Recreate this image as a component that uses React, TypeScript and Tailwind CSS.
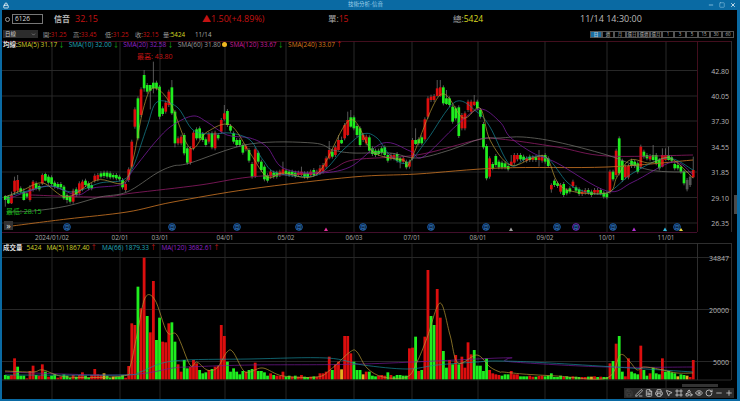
import { ChevronDown, Eye, FileText, Frame, Lock, Minus, MousePointer2, PenLine, Plus, Printer, RotateCw, Save, Shapes, Square, X } from 'lucide-react';

type Tone = 'r' | 'g' | 'y' | 'n';
// top, bottom, tone, optional wick high / low. y values are thirds of a pixel below y=60
type Candle = [number, number, Tone, number?, number?];
type Point = [number, number];

const candles: Candle[] = [
  [408,420,'g',405,440],[410,430,'g',405,432],[405,430,'r',395,432],[362,395,'r',350,405],[360,392,'r',345,400],[385,395,'g'],[395,420,'g',385,422],[400,410,'g'],[385,420,'r',375,425],[365,390,'r',360,395],
  [370,385,'g'],[378,388,'g'],[345,370,'r',340,375],[342,362,'g',338,364],[350,368,'g'],[352,372,'g'],[368,380,'g'],[372,382,'g'],[372,382,'g'],[380,415,'g',375,420],
  [405,420,'g',400,430],[410,425,'g'],[392,425,'r'],[388,405,'g'],[370,400,'r'],[365,388,'r'],[362,375,'g'],[370,385,'g'],[375,385,'g'],[347,362,'r'],
  [345,358,'r'],[340,350,'g'],[338,348,'g'],[338,350,'g'],[340,352,'g'],[345,352,'g'],[345,355,'g'],[350,358,'g'],[360,382,'g'],[372,390,'r'],
  [328,360,'r'],[245,320,'r'],[148,200,'r'],[115,235,'g'],[88,165,'r'],[45,85,'g',30,95],[75,95,'g'],[75,92,'g',75,148],[68,85,'g',5,100],[68,85,'g'],
  [80,170,'g',75,178],[145,162,'g'],[128,155,'r'],[95,135,'r'],[82,160,'g',60,165],[155,250,'g',150,262],[235,250,'r'],[230,250,'r'],[225,280,'g'],[265,308,'g'],
  [265,308,'r'],[218,265,'r'],[208,235,'g'],[205,235,'g'],[222,240,'g'],[238,255,'g'],[222,245,'r'],[220,262,'g'],[218,265,'r'],[225,235,'g'],
  [180,215,'r'],[160,178,'r',135,182],[153,195,'g'],[198,212,'g'],[220,245,'g'],[240,255,'g'],[240,255,'g'],[255,278,'g'],[258,268,'r'],[270,302,'g'],
  [312,350,'g'],[268,348,'r'],[278,305,'g'],[305,330,'g'],[320,358,'g'],[345,362,'g',340,368],[335,350,'r'],[338,350,'g'],[338,350,'g'],[335,345,'r'],
  [328,342,'r',305,345],[332,342,'g'],[335,345,'g'],[335,345,'g'],[338,348,'g'],[338,345,'r'],[335,345,'r',320,348],[340,350,'g'],[340,352,'g'],[335,345,'r'],
  [330,345,'g'],[335,342,'r'],[325,342,'r',315,345],[315,335,'r'],[295,320,'r'],[270,295,'r',243,298],[275,290,'g'],[262,285,'r'],[240,270,'r',225,272],[240,250,'g',230,252],
  [195,235,'r'],[180,225,'r',155,228],[172,200,'g',150,203],[172,205,'g'],[198,225,'g'],[205,255,'g'],[225,240,'r'],[230,250,'r'],[232,272,'g'],[265,282,'g'],
  [272,285,'g'],[272,282,'g'],[265,278,'g'],[262,285,'g'],[285,302,'g'],[285,295,'r'],[285,295,'r'],[282,302,'g'],[295,305,'g',290,325],[295,305,'r'],
  [305,322,'g'],[305,320,'r'],[240,295,'r'],[240,252,'g',205,255],[238,250,'g'],[232,250,'g'],[178,238,'r'],[115,170,'r'],[110,120,'r'],[108,120,'r'],
  [85,108,'r',60,110],[82,108,'r',60,110],[82,130,'g'],[115,132,'g',90,135],[115,135,'g'],[140,185,'g'],[145,175,'g'],[142,228,'g'],[165,205,'r'],[160,205,'r'],
  [125,150,'r'],[125,155,'r'],[125,135,'r',105,138],[125,145,'g'],[150,170,'g'],[192,262,'g'],[258,355,'g'],[295,350,'r'],[312,325,'g'],[288,315,'g'],
  [305,322,'g'],[308,322,'g'],[310,322,'g'],[318,328,'g'],[305,315,'r',285,318],[285,308,'r'],[285,298,'r'],[285,298,'g'],[290,300,'g'],[295,302,'r'],
  [290,300,'g'],[292,300,'r'],[292,300,'g'],[292,300,'r',270,320],[290,302,'r'],[285,305,'g'],[295,318,'g'],[375,388,'r',370,398],[362,375,'g'],[370,378,'g'],
  [375,395,'r'],[372,405,'g'],[390,400,'g'],[385,395,'g'],[365,378,'r'],[382,392,'g'],[388,402,'g'],[395,402,'r'],[390,398,'r'],[390,398,'g'],
  [395,405,'g'],[390,398,'r'],[390,398,'r'],[390,400,'g'],[398,410,'g'],[400,412,'g'],[335,395,'r'],[335,358,'g'],[272,345,'r'],[235,340,'g'],
  [302,360,'g'],[320,352,'r'],[318,352,'r'],[302,318,'g'],[305,318,'g'],[310,335,'g'],[260,320,'r'],[275,290,'g'],[285,295,'g'],[288,298,'r'],
  [285,300,'g',255,302],[285,310,'g'],[300,325,'g'],[285,320,'r',265,322],[285,300,'r',265,302],[285,300,'g',260,302],[292,302,'g'],[312,325,'g'],[315,325,'g'],[320,335,'g'],
  [335,370,'g'],[360,388,'n'],[350,375,'n'],[330,352,'r',290,355],
];

// bar top, thirds of a pixel below y=235; the bars all stand on 433
const volumes: [number, Tone][] = [
  [420,'g'],[422,'g'],[420,'r'],[370,'r'],[395,'g'],[422,'g'],[422,'g'],[430,'r'],[408,'r'],[392,'r'],
  [420,'g'],[422,'r'],[388,'r'],[410,'g'],[425,'r'],[422,'g'],[418,'g'],[428,'r'],[425,'r'],[418,'g'],
  [422,'g'],[428,'g'],[420,'r'],[425,'g'],[420,'r'],[412,'r'],[422,'g'],[428,'g'],[420,'r'],[402,'r'],
  [418,'r'],[420,'r'],[415,'y'],[422,'g'],[428,'g'],[425,'y'],[425,'g'],[425,'g'],[420,'g'],[428,'r'],
  [393,'r'],[265,'r'],[270,'r'],[155,'g'],[220,'r'],[68,'r'],[243,'g'],[292,'r'],[138,'r'],[315,'g'],
  [248,'g'],[320,'r'],[322,'r'],[265,'r'],[262,'g'],[320,'g'],[388,'r'],[410,'r'],[375,'g'],[400,'g'],
  [395,'r'],[375,'r'],[385,'r'],[405,'g'],[415,'g'],[412,'g'],[405,'r'],[402,'g'],[395,'r'],[392,'r'],
  [270,'r'],[303,'r'],[380,'g'],[410,'g'],[400,'g'],[410,'g'],[418,'g'],[408,'g'],[410,'r'],[405,'g'],
  [402,'g'],[383,'r'],[408,'g'],[408,'g'],[412,'g'],[422,'g'],[415,'r'],[420,'g'],[422,'r'],[422,'r'],
  [410,'r'],[425,'g'],[422,'g'],[425,'r'],[422,'g'],[425,'r'],[420,'r'],[425,'g'],[426,'g'],[425,'r'],
  [424,'g'],[425,'r'],[415,'r'],[415,'r'],[410,'r'],[365,'r'],[405,'g'],[388,'r'],[380,'r'],[403,'y'],
  [303,'r'],[303,'r'],[355,'r'],[380,'g'],[405,'g'],[405,'g'],[418,'y'],[410,'r'],[410,'g'],[422,'g'],
  [424,'g'],[422,'r'],[420,'r'],[422,'r'],[412,'g'],[420,'r'],[424,'g'],[420,'g'],[420,'g'],[422,'g'],
  [422,'g'],[340,'r'],[338,'r'],[305,'g'],[408,'r'],[405,'g'],[305,'r'],[105,'r'],[243,'g'],[270,'g'],
  [162,'r'],[248,'r'],[348,'g'],[398,'g'],[375,'r'],[388,'g'],[360,'r'],[388,'g'],[365,'r'],[398,'r'],
  [322,'r'],[358,'r'],[345,'g'],[392,'g'],[392,'g'],[408,'g'],[370,'g'],[405,'r'],[415,'r'],[418,'r'],
  [420,'r'],[422,'g'],[418,'g'],[418,'g'],[408,'r'],[418,'r'],[418,'r'],[424,'g'],[424,'g'],[424,'g'],
  [422,'r'],[425,'r'],[425,'g'],[423,'r'],[422,'r'],[424,'g'],[422,'g'],[415,'g'],[426,'g'],[426,'g'],
  [422,'g'],[426,'r'],[424,'g'],[426,'g'],[424,'r'],[425,'g'],[426,'g'],[426,'r'],[426,'r'],[425,'g'],
  [425,'y'],[424,'r'],[426,'g'],[425,'r'],[426,'g'],[426,'g'],[385,'r'],[378,'g'],[326,'r'],[303,'g'],
  [410,'g'],[424,'r'],[370,'r'],[410,'g'],[415,'g'],[418,'g'],[332,'r'],[405,'g'],[422,'g'],[415,'r'],
  [398,'g'],[415,'g'],[418,'g'],[370,'r'],[410,'g'],[408,'g'],[412,'g'],[415,'g'],[424,'y'],[418,'g'],
  [420,'g'],[422,'y'],[426,'r'],[375,'r'],
];

const priceAverages: { color: string; width: number; points: Point[] }[] = [
  { color: '#b86a20', width: 0.9, points: [[12,226],[67,219],[127,212],[173,202],[250,189],[353,177],[417,174],[500,168],[607,167],[693,160]] },
  { color: '#8e1c66', width: 0.8, points: [[30,195],[100,197],[133,193],[200,185],[250,177],[323,172],[353,160],[417,155],[477,140],[500,139],[557,147],[607,156],[693,155]] },
  { color: '#7a7a72', width: 0.7, points: [[7,212],[33,211],[67,206],[100,197],[127,192],[157,173],[173,166],[190,163],[250,144],[313,143],[333,150],[353,153],[390,153],[417,158],[450,150],[480,139],[500,138],[523,137],[557,142],[607,155],[650,170],[693,172]] },
  { color: '#761a98', width: 0.8, points: [[5,200],[27,192],[50,186],[77,195],[93,188],[123,184],[133,170],[157,140],[173,125],[193,116],[207,122],[227,135],[250,138],[267,147],[283,168],[317,173],[350,167],[383,143],[410,151],[423,157],[457,125],[480,109],[500,122],[510,137],[533,153],[557,163],[607,191],[633,182],[673,162],[693,175]] },
  { color: '#178a9a', width: 0.7, points: [[5,197],[20,193],[50,186],[73,192],[100,183],[123,180],[133,167],[147,127],[157,102],[177,107],[193,130],[213,134],[230,133],[250,140],[263,160],[277,173],[317,175],[343,150],[363,134],[377,138],[390,155],[407,163],[427,140],[455,102],[477,112],[490,127],[510,165],[527,158],[547,158],[567,182],[583,191],[607,193],[633,173],[667,158],[693,170]] },
  { color: '#b89a34', width: 0.7, points: [[5,197],[23,190],[43,183],[67,197],[97,180],[123,183],[133,160],[143,110],[153,88],[170,103],[190,148],[207,132],[230,125],[250,153],[267,177],[283,173],[317,174],[350,120],[373,152],[403,160],[410,162],[440,95],[463,118],[480,108],[490,140],[510,165],[533,158],[547,158],[563,188],[607,193],[617,177],[630,160],[650,163],[670,158],[693,178]] },
];

const volumeAverages: { color: string; points: Point[] }[] = [
  { color: '#761a98', points: [[5,372],[123,375],[173,368],[187,367],[250,365],[363,364],[500,358],[507,359],[513,362],[607,367],[693,367]] },
  { color: '#178a9a', points: [[5,375],[123,375],[140,372],[173,361],[250,359],[327,358],[363,365],[407,369],[437,365],[477,362],[500,361],[550,363],[693,372]] },
  { color: '#b89a34', points: [[5,371],[33,372],[43,370],[67,377],[123,376],[130,367],[137,335],[145,298],[155,300],[167,332],[177,335],[190,365],[197,362],[207,370],[217,368],[227,352],[233,352],[243,370],[250,372],[263,368],[283,376],[317,377],[330,370],[350,352],[357,352],[367,368],[383,377],[407,377],[417,362],[427,338],[440,303],[450,335],[458,363],[477,355],[490,367],[500,372],[503,372],[523,374],[557,376],[607,378],[620,355],[630,362],[637,370],[643,367],[653,368],[663,370],[677,373],[693,373]] },
];

const dates: [string, number][] = [['2024/01/02',52],['02/01',120],['03/01',160],['04/01',225],['05/02',286],['06/03',354],['07/01',412],['08/01',478],['09/02',545],['10/01',607],['11/01',666]];
const priceAxis: [string, number][] = [['42.80',70.5],['40.05',96],['37.30',121],['34.55',146.5],['31.85',172],['29.10',197.5],['26.35',223]];
const volumeAxis: [string, number][] = [['34847',257.5],['20000',309.5],['5000',361.5]];
const monthMarks: [number, string][] = [[67,'#1d5fa8'],[172,'#1d5fa8'],[237,'#1d5fa8'],[299,'#1d5fa8'],[363,'#1d5fa8'],[431,'#1d5fa8'],[486,'#1d5fa8'],[557,'#1d5fa8'],[576,'#7a22b8'],[613,'#1d5fa8'],[677,'#1d5fa8']];
const flags: [number, string][] = [[326,'#e0309a'],[511,'#a0a0a0'],[634,'#b030d0'],[665,'#30b8e0']];

const smaLegend = [
  { text: 'SMA(5) 31.17', color: 'text-[#cfcf2a]', arrow: '↓', up: false, ml: 'ml-0' },
  { text: 'SMA(10) 32.00', color: 'text-[#22a8b8]', arrow: '↓', up: false, ml: 'ml-[4px]' },
  { text: 'SMA(20) 32.58', color: 'text-[#8f22c8]', arrow: '↓', up: false, ml: 'ml-[4px]' },
  { text: 'SMA(60) 31.80', color: 'text-[#9a9a9a]', arrow: '', up: false, ml: 'ml-[4px]' },
  { text: 'SMA(120) 33.67', color: 'text-[#c81a9a]', arrow: '↓', up: false, ml: 'ml-[3px]' },
  { text: 'SMA(240) 33.07', color: 'text-[#d8781a]', arrow: '↑', up: true, ml: 'ml-[4px]' },
];

const tabs = ['日', '週', '月', '還日', '還週', '還月', '1', '3', '5', '15', '30', '60'];
const tools = [Save, PenLine, FileText, Printer, MousePointer2, Frame, Shapes, Eye, RotateCw, Minus, Plus];

const barColor: Record<Tone, string> = { r: '#dc0e0e', g: '#1fee1f', y: '#e8b020', n: '#555' };
const candleX = (i: number) => 5.3 + 3.085 * i;

function smoothPath(points: Point[]) {
  let d = `M${points[0][0]} ${points[0][1]}`;
  for (let i = 0; i < points.length - 1; i++) {
    const p0 = points[i - 1] ?? points[i];
    const p1 = points[i];
    const p2 = points[i + 1];
    const p3 = points[i + 2] ?? p2;
    const c1x = p1[0] + (p2[0] - p0[0]) / 6;
    const c1y = p1[1] + (p2[1] - p0[1]) / 6;
    const c2x = p2[0] - (p3[0] - p1[0]) / 6;
    const c2y = p2[1] - (p3[1] - p1[1]) / 6;
    d += ` C${c1x.toFixed(1)} ${c1y.toFixed(1)} ${c2x.toFixed(1)} ${c2y.toFixed(1)} ${p2[0]} ${p2[1]}`;
  }
  return d;
}

function PricePanel() {
  return (
    <svg className="block w-full h-[202px]" viewBox="2 41 735 202">
      <rect x="2" y="41" width="735" height="202" fill="#000" />
      {priceAxis.map(([, y]) => <line key={y} x1="2" x2="697" y1={y} y2={y} stroke="#2b2b2b" strokeWidth="0.9" />)}
      {dates.map(([, x]) => <line key={x} x1={x} x2={x} y1="41" y2="232" stroke="#2e2e2e" strokeWidth="0.9" />)}
      <line x1="2" x2="731" y1="41.5" y2="41.5" stroke="#4a1020" strokeWidth="0.9" />
      <line x1="2" x2="697" y1="232.5" y2="232.5" stroke="#4a1030" strokeWidth="0.9" />
      <line x1="697.5" x2="697.5" y1="41" y2="232" stroke="#4a1020" strokeWidth="0.9" />
      <line x1="731.5" x2="731.5" y1="41" y2="232" stroke="#333" strokeWidth="0.9" />

      {candles.map(([top, bottom, tone, high, low], i) => {
        const x = candleX(i);
        return (
          <g key={i}>
            <line x1={x} x2={x} y1={60 + (high ?? top - 6) / 3} y2={60 + (low ?? bottom + 6) / 3} stroke="#7d7d7d" strokeWidth="0.7" />
            <rect x={x - 1.35} y={60 + top / 3} width="2.7" height={(bottom - top) / 3} fill={barColor[tone]} />
          </g>
        );
      })}

      {priceAverages.map((line) => (
        <path key={line.color} d={smoothPath(line.points)} fill="none" stroke={line.color} strokeWidth={line.width} />
      ))}

      {monthMarks.map(([x, color]) => (
        <g key={x}>
          <circle cx={x} cy="227" r="3.4" fill="#0b2240" stroke={color} strokeWidth="0.9" />
          <text x={x} y="229" textAnchor="middle" fontSize="5" fill="#3a86d0">月</text>
        </g>
      ))}
      {flags.map(([x, color]) => <polygon key={x} points={`${x - 2},231 ${x + 2},231 ${x},227.5`} fill={color} />)}
      <polygon points="679,231 683,231 681,228" fill="#e8d840" />

      <text x="137" y="59" fontSize="7" fill="#c81414">最高: 43.80</text>
      <text x="6" y="213.5" fontSize="7" fill="#18c018">最低: 28.15</text>
      {priceAxis.map(([label, y]) => <text key={label} x="729" y={y + 3} textAnchor="end" fontSize="7" fill="#b8b8b8">{label}</text>)}
      {dates.map(([label, x]) => <text key={label} x={x} y="240" textAnchor="middle" fontSize="6.4" fill="#a8a8a8">{label}</text>)}

      <rect x="4" y="221" width="9" height="9" fill="#333" />
      <text x="8.5" y="229" textAnchor="middle" fontSize="9" fill="#ddd">»</text>
    </svg>
  );
}

function VolumePanel() {
  return (
    <svg className="block w-full h-[156px]" viewBox="2 243 735 156">
      {volumeAxis.map(([, y]) => <line key={y} x1="2" x2="731" y1={y} y2={y} stroke="#2b2b2b" strokeWidth="0.9" />)}
      {dates.map(([, x]) => <line key={x} x1={x} x2={x} y1="243" y2="399" stroke="#282828" strokeWidth="0.9" />)}
      <line x1="2" x2="731" y1="243.5" y2="243.5" stroke="#333" strokeWidth="0.9" />
      <line x1="2" x2="731" y1="380" y2="380" stroke="#2f2f2f" strokeWidth="0.9" />
      <line x1="697.5" x2="697.5" y1="243" y2="380" stroke="#333" strokeWidth="0.9" />
      <line x1="731.5" x2="731.5" y1="243" y2="380" stroke="#333" strokeWidth="0.9" />

      {volumes.map(([top, tone], i) => (
        <rect key={i} x={candleX(i) - 1.4} y={235 + top / 3} width="2.8" height={(433 - top) / 3} fill={barColor[tone]} />
      ))}
      {volumeAverages.map((line) => (
        <path key={line.color} d={smoothPath(line.points)} fill="none" stroke={line.color} strokeWidth="0.7" />
      ))}
      {volumeAxis.map(([label, y]) => <text key={label} x="729" y={y + 3} textAnchor="end" fontSize="7" fill="#b8b8b8">{label}</text>)}
    </svg>
  );
}

export default function App() {
  return (
    <div className="relative w-[740px] h-[401px] overflow-hidden bg-[#0a6aa3] flex flex-col font-['Open_Sans','Noto_Sans_CJK_TC',sans-serif]">
      {/* Title bar */}
      <div className="h-[10px] flex items-center justify-between pl-[3px] pr-[4px] text-[#9fd0ea]">
        <Lock className="w-[6px] h-[7px] text-white" strokeWidth={3} />
        <span className="text-[5.5px] leading-none ml-[14px]">技術分析-信音</span>
        <div className="flex items-center gap-[5px]">
          <Minus className="w-[6px] h-[6px]" strokeWidth={3} />
          <Square className="w-[6px] h-[6px]" strokeWidth={2} />
          <X className="w-[6px] h-[6px] text-white" strokeWidth={3} />
        </div>
      </div>

      <div className="flex-1 min-h-0 ml-[2px] mr-[3px] bg-black flex flex-col">
        {/* Quote row */}
        <div className="h-[18px] flex items-center pl-[3px] shrink-0">
          <span className="w-[5px] h-[5px] rounded-full border border-[#999] shrink-0" />
          <div className="ml-[2px] w-[31px] h-[10px] border border-[#777] flex items-center pl-[2px] text-[6.5px] text-[#ddd]">6126</div>
          <div className="ml-[11px] w-[148px] flex items-center gap-[5px]">
            <span className="text-[8px] font-semibold text-[#bbb]">信音</span>
            <span className="text-[9px] text-[#c41212]">32.15</span>
          </div>
          <div className="w-[126px] text-[9px] text-[#c41212]">▲1.50(+4.89%)</div>
          <div className="w-[125px] text-[8.5px] text-[#aaa]">單:<span className="text-[#c41212]">15</span></div>
          <div className="w-[127px] text-[8.5px] text-[#aaa]">總:<span className="text-[#d8d820]">5424</span></div>
          <div className="text-[9px] text-[#bbb]">11/14 14:30:00</div>
        </div>

        {/* OHLC row and period tabs */}
        <div className="h-[13px] flex items-center justify-between pl-[1px] pr-[3px] shrink-0">
          <div className="flex items-center">
            <div className="w-[35px] h-[8px] bg-[#2c2c2c] flex items-center justify-between px-[2px] text-[5.5px] text-[#ccc]">
              日線
              <ChevronDown className="w-[5px] h-[5px]" />
            </div>
            <div className="flex ml-[5px] text-[6.2px] text-[#999]">
              <span className="w-[30px]">開:<span className="text-[#c41212]">31.25</span></span>
              <span className="w-[32px]">高:<span className="text-[#c41212]">33.45</span></span>
              <span className="w-[30px]">低:<span className="text-[#c41212]">31.25</span></span>
              <span className="w-[28px]">收:<span className="text-[#c41212]">32.15</span></span>
              <span className="w-[32px]">量:<span className="text-[#d8d820]">5424</span></span>
              <span className="text-[#aaa]">11/14</span>
            </div>
          </div>
          <div className="flex">
            {tabs.map((tab, i) => (
              <span
                key={tab}
                className={`w-[12px] h-[7px] flex items-center justify-center border border-[#555] text-[4.5px] leading-none ${i === 0 ? 'bg-[#1b6ea0] text-white' : 'bg-black text-[#bbb]'}`}
              >
                {tab}
              </span>
            ))}
          </div>
        </div>

        {/* Charts */}
        <div className="relative flex-1 min-h-0">
          <div className="absolute z-10 left-[1px] top-0 flex items-center h-[9px] text-[6.5px] leading-none whitespace-nowrap">
            <span className="text-[#ddd] font-semibold">均線:</span>
            {smaLegend.map((item) => (
              <span key={item.text} className={`${item.ml} ${item.color}`}>
                {item.text}
                {item.arrow && <span className={`ml-[1px] ${item.up ? 'text-[#d81818]' : 'text-[#18b818]'}`}>{item.arrow}</span>}
                {item.text.startsWith('SMA(60)') && <span className="inline-block w-[5px] h-[5px] rounded-full bg-[#f0b820] ml-[1px]" />}
              </span>
            ))}
          </div>
          <PricePanel />
          <div className="absolute z-10 left-[1px] top-[203px] flex items-center h-[9px] text-[6.5px] leading-none whitespace-nowrap">
            <span className="text-[#ddd] font-semibold mr-[4px]">成交量</span>
            <span className="text-[#cfcf2a]">5424</span>
            <span className="text-[#cfcf2a] ml-[5px]">MA(5) 1867.40<span className="text-[#d81818] ml-[1px]">↑</span></span>
            <span className="text-[#22a8b8] ml-[5px]">MA(66) 1879.33<span className="text-[#d81818] ml-[1px]">↑</span></span>
            <span className="text-[#8f22c8] ml-[5px]">MA(120) 3682.61<span className="text-[#d81818] ml-[1px]">↑</span></span>
          </div>
          <VolumePanel />

          {/* Scroll handles and drawing tools sit on top of the chart */}
          <div className="absolute right-[0px] top-[154px] w-[3px] h-[19px] bg-[#4a4a4a]" />
          <div className="absolute left-[680px] top-[343px] w-[36px] h-[3px] bg-[#333]" />
          <div className="absolute right-[3px] top-[347px] flex">
            {tools.map((Icon, i) => (
              <span key={i} className="w-[10px] h-[10px] flex items-center justify-center bg-[#2a2a2a]">
                <Icon className={`w-[8px] h-[8px] ${i === 0 ? 'text-[#444]' : 'text-[#cfcfcf]'}`} strokeWidth={2.4} />
              </span>
            ))}
          </div>
        </div>
      </div>
      <div className="h-[2px] shrink-0" />
    </div>
  );
}
